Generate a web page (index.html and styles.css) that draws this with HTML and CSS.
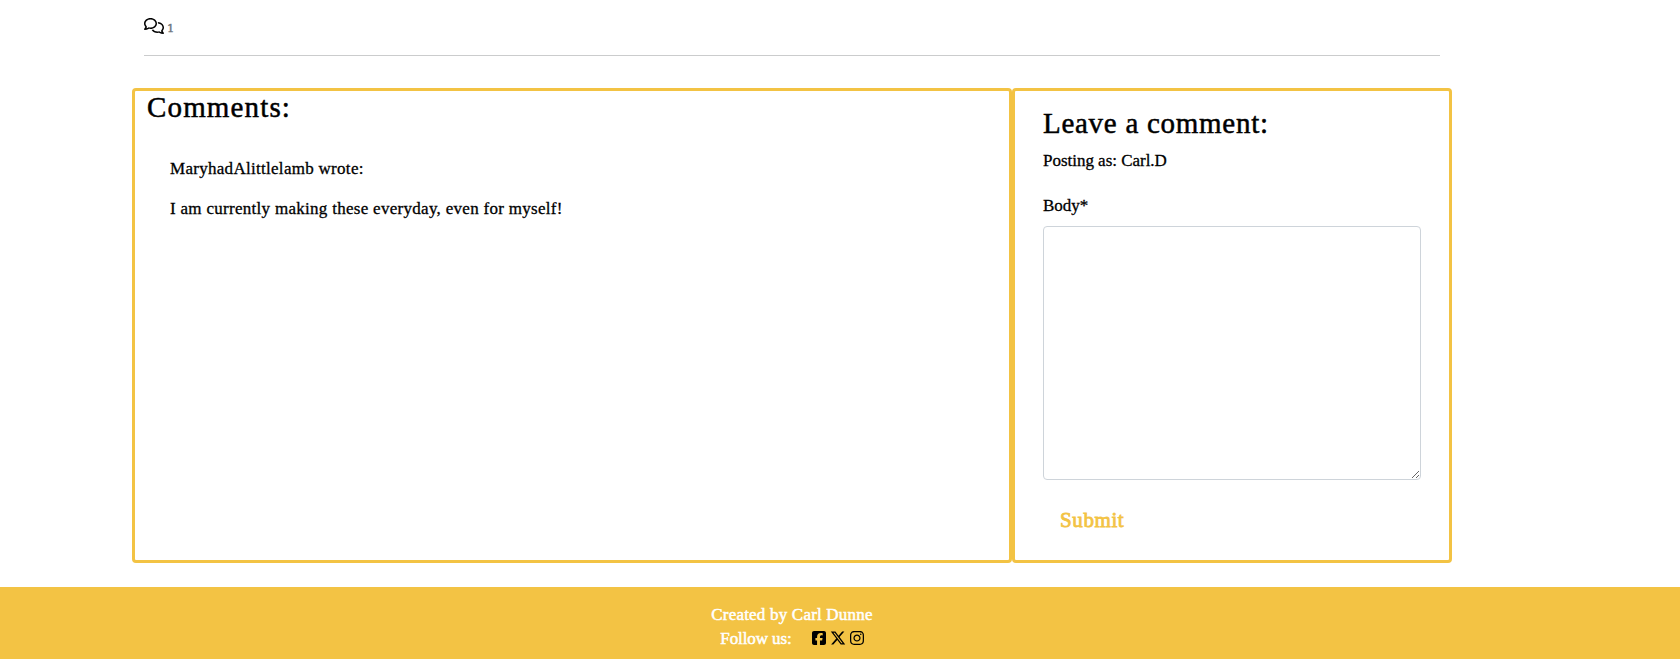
FILE: index.html
```html
<!DOCTYPE html>
<html lang="en">
<head>
<meta charset="utf-8">
<title>Comments</title>
<link rel="stylesheet" href="styles.css">
</head>
<body>
<main class="container">
  <div class="summary">
    <svg class="comments-icon" viewBox="0 0 640 512"><path d="M88.200 309.100c9.800-18.300 6.800-40.800-7.500-55.800C59.400 230.900 48 204 48 176c0-63.500 63.800-128 160-128s160 64.500 160 128s-63.800 128-160 128c-13.100 0-25.800-1.300-37.800-3.600c-10.400-2-21.200-.6-30.700 4.200c-4.100 2.100-8.300 4.100-12.600 6c-16 7.200-32.900 13.500-49.900 18c2.800-4.600 5.400-9.100 7.900-13.600c1.100-1.900 2.200-3.900 3.200-5.900zM208 352c114.900 0 208-78.800 208-176S322.900 0 208 0S0 78.800 0 176c0 41.800 17.200 80.100 45.900 110.300c-.9 1.700-1.900 3.500-2.800 5.100c-10.300 18.400-22.300 36.500-36.600 52.100c-6.600 7-8.300 17.200-4.600 25.900C5.800 378.300 14.400 384 24 384c43 0 86.500-13.300 122.700-29.700c4.800-2.200 9.600-4.500 14.200-6.800c15.100 3 30.900 4.500 47.100 4.500zM432 480c16.200 0 31.900-1.600 47.100-4.500c4.600 2.300 9.400 4.600 14.200 6.800C529.500 498.700 573 512 616 512c9.600 0 18.200-5.700 22-14.500c3.800-8.800 2-19-4.600-25.900c-14.200-15.600-26.200-33.700-36.600-52.100c-.9-1.700-1.900-3.400-2.800-5.100C622.800 384.100 640 345.800 640 304c0-94.400-87.900-171.500-198.200-175.800c4.100 15.200 6.200 31.200 6.200 47.800l0 .6c87.200 6.700 144 67.500 144 127.400c0 28-11.400 54.900-32.700 77.200c-14.300 15-17.300 37.600-7.500 55.800c1.100 2 2.200 4 3.200 5.900c2.500 4.500 5.200 9 7.900 13.600c-17-4.500-33.900-10.700-49.900-18c-4.300-1.900-8.500-3.900-12.600-6c-9.500-4.800-20.300-6.200-30.700-4.200c-12.100 2.400-24.800 3.600-37.800 3.600c-61.700 0-110-26.500-136.800-62.300c-16 5.400-32.800 9.400-50 11.800C279 439.800 350 480 432 480z"/></svg>
    <span class="count">1</span>
  </div>
  <div class="columns">
    <section class="panel comments">
      <h3 class="heading comments-title">Comments:</h3>
      <div class="comment">
        <p class="text"><span class="author">MaryhadAlittlelamb wrote:</span></p>
        <p class="text"><span class="message">I am currently making these everyday, even for myself!</span></p>
      </div>
    </section>
    <section class="panel form-panel">
      <h3 class="heading leave-title">Leave a comment:</h3>
      <p class="text posting">Posting as: Carl.D</p>
      <form>
        <label class="text body-label" for="body">Body*</label>
        <textarea class="body-input" id="body"></textarea>
        <button class="submit" type="button">Submit</button>
      </form>
    </section>
  </div>
</main>
<footer class="footer">
  <div class="footer-inner">
    <p class="credit">Created by Carl Dunne</p>
    <div class="follow">
      <span class="follow-label">Follow us:</span>
      <div class="socials">
        <svg class="social" viewBox="0 0 448 512"><path d="M64 32C28.700 32 0 60.700 0 96V416c0 35.300 28.700 64 64 64h98.200V334.200H109.400V256h52.800V222.300c0-87.100 39.400-127.500 125-127.500c16.200 0 44.200 3.200 55.700 6.400V172c-6-.6-16.500-1-29.600-1c-42 0-58.200 15.900-58.200 57.200V256h83.600l-14.400 78.200H255V480H384c35.300 0 64-28.700 64-64V96c0-35.300-28.700-64-64-64H64z"/></svg>
        <svg class="social social-x" viewBox="0 0 512 512"><path d="M389.200 48h70.600L305.600 224.200 487 464H345L233.700 318.600 106.500 464H35.800L200.700 275.500 26.800 48H172.400L272.900 180.900 389.200 48zM364.400 421.800h39.100L151.100 88h-42L364.400 421.800z"/></svg>
        <svg class="social" viewBox="0 0 448 512"><path d="M224.100 141c-63.600 0-114.900 51.300-114.900 114.900s51.300 114.900 114.900 114.900S339 319.500 339 255.900 287.700 141 224.100 141zm0 189.600c-41.100 0-74.700-33.500-74.700-74.700s33.500-74.700 74.700-74.700 74.700 33.500 74.700 74.700-33.600 74.700-74.700 74.700zm146.400-194.300c0 14.900-12 26.800-26.800 26.800-14.900 0-26.800-12-26.800-26.800s12-26.800 26.800-26.800 26.800 12 26.800 26.800zm76.100 27.200c-1.700-35.900-9.900-67.700-36.200-93.900-26.200-26.200-58-34.400-93.900-36.200-37-2.100-147.900-2.100-184.900 0-35.800 1.700-67.600 9.900-93.900 36.100s-34.400 58-36.200 93.900c-2.100 37-2.100 147.900 0 184.900 1.700 35.900 9.900 67.700 36.200 93.900s58 34.400 93.900 36.200c37 2.100 147.900 2.100 184.900 0 35.900-1.700 67.700-9.900 93.900-36.200 26.200-26.200 34.400-58 36.200-93.900 2.100-37 2.100-147.800 0-184.800zM398.800 388c-7.800 19.600-22.900 34.700-42.600 42.600-29.500 11.700-99.500 9-132.100 9s-102.700 2.600-132.100-9c-19.600-7.800-34.700-22.900-42.600-42.600-11.700-29.500-9-99.500-9-132.100s-2.600-102.700 9-132.100c7.800-19.600 22.900-34.700 42.600-42.600 29.500-11.700 99.500-9 132.100-9s102.700-2.600 132.100 9c19.600 7.800 34.700 22.900 42.600 42.600 11.700 29.500 9 99.500 9 132.100s2.700 102.700-9 132.100z"/></svg>
      </div>
    </div>
  </div>
</footer>
</body>
</html>
```
FILE: styles.css
```css
* { box-sizing: border-box; }
body {
  margin: 0;
  background: #fff;
  color: #000;
  font-family: "Liberation Serif", serif;
  font-size: 17px;
  line-height: 24px;
  overflow: hidden;
}
.container { width: 1320px; margin-left: 132px; }
.summary {
  display: flex;
  gap: 3px;
  height: 56px;
  margin: 0 12px;
  padding-top: 18px;
  border-bottom: 1px solid #cbcccd;
}
.comments-icon { width: 20px; height: 16px; }
.count {
  color: #6c757d;
  font-family: "DejaVu Serif", serif;
  font-size: 11.5px;
  line-height: 20px;
  -webkit-text-stroke: 0.4px;
}
.columns { display: flex; height: 475px; margin-top: 32px; }
.panel { border: 3px solid #f3c344; border-radius: 4px; }
.comments { width: 880px; padding: 3px 12px; }
.form-panel { width: 440px; padding: 15px 28px; }
.heading {
  margin: 0;
  font-size: 29px;
  font-weight: 400;
  line-height: 34px;
  -webkit-text-stroke: 0.5px;
}
.comments-title { letter-spacing: 1.15px; margin: -4px 0 1px; }
.leave-title { letter-spacing: 0.72px; }
.comment { padding: 32px 23px; }
.text { margin: 0 0 16px; -webkit-text-stroke: 0.3px; }
.author, .message { letter-spacing: 0.29px; }
.posting { margin: 9px 0 21px; letter-spacing: -0.02px; }
.body-label { display: block; margin-bottom: 8px; }
.body-input {
  display: block;
  width: 378px;
  height: 254px;
  border: 1px solid #ced4da;
  border-radius: 4px;
  background: #fff;
  resize: vertical;
}
.submit {
  margin-top: 24px;
  padding: 0 17px;
  border: 0;
  background: none;
  color: #f3c344;
  font: 21px/32px "Liberation Serif", serif;
  -webkit-text-stroke: 0.8px;
  letter-spacing: 0.6px;
}
.footer { height: 72px; margin-top: 24px; background: #f3c344; color: #fff; }
.footer-inner {
  width: 1584px;
  padding-top: 16px;
  display: flex;
  flex-direction: column;
  align-items: center;
  -webkit-text-stroke: 0.5px;
}
.credit { margin: 0; letter-spacing: 0.2px; }
.follow { display: flex; gap: 20px; }
.follow-label { letter-spacing: -0.1px; }
.socials { display: flex; gap: 4px; padding-top: 3px; color: #000; }
.social { width: 14px; height: 16px; fill: #000; stroke: none; }
.social-x { width: 16px; }
```
